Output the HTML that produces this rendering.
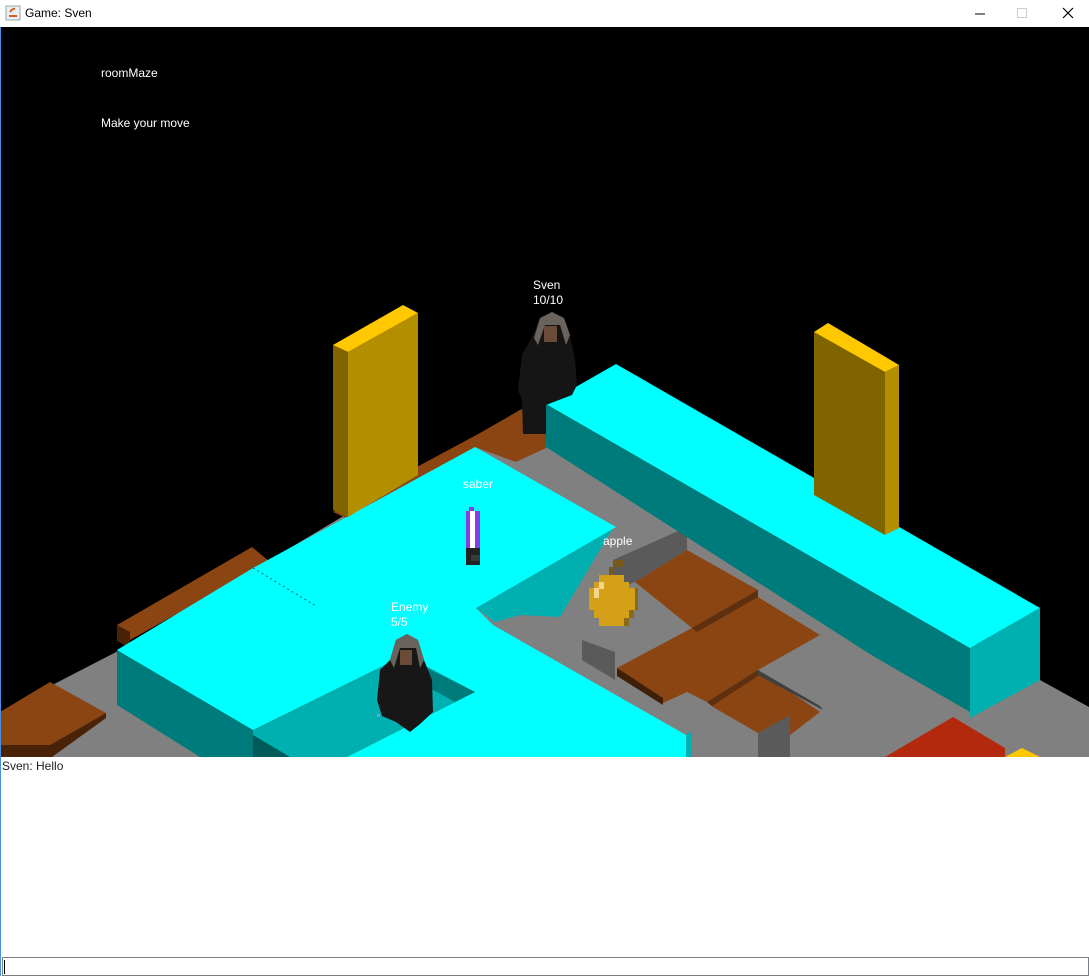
<!DOCTYPE html>
<html><head><meta charset="utf-8"><style>
html,body{margin:0;padding:0;width:1089px;height:976px;overflow:hidden;background:#fff;font-family:"Liberation Sans",sans-serif;}
.t{position:absolute;color:#fff;font-size:12px;line-height:14px;white-space:nowrap;}
</style></head><body>
<svg width="1089" height="976" style="position:absolute;left:0;top:0" xmlns="http://www.w3.org/2000/svg">
<defs><clipPath id="c"><rect x="1" y="27" width="1088" height="730"/></clipPath></defs>
<rect x="0" y="0" width="1089" height="27" fill="#fff"/>
<rect x="0" y="27" width="1" height="949" fill="#4a90e2"/>
<g clip-path="url(#c)">
<rect x="0" y="27" width="1089" height="730" fill="#000"/>
<!-- floor base -->
<polygon points="0,712 120,650 520,410 546,404 1040,680 1089,707 1089,760 0,760" fill="#808080"/>
<!-- brown tiles -->
<polygon points="0,712 50,682 106,713 50,745 0,745" fill="#8b4513"/>
<polygon points="0,745 50,745 106,713 106,718 52,757 0,757" fill="#4a2208"/>
<polygon points="117,625 252,547 270,562 130,640" fill="#8b4513"/>
<polygon points="117,625 130,632 130,648 117,641" fill="#4a2208"/>
<polygon points="333,512 480,433 520,410 546,405 546,448 516,462 475,447 350,520" fill="#8b4513"/>
<!-- gray box near apple -->
<polygon points="613,560 687,527 687,550 635,582 613,590" fill="#5a5a5a"/>
<polygon points="582,640 615,652 615,680 582,660" fill="#5a5a5a"/>
<!-- middle brown -->
<polygon points="635,582 687,550 758,590 758,597 820,635 758,670 820,712 790,735 757,745 707,702 687,692 663,703 617,668 692,628" fill="#8b4513"/>
<polygon points="692,628 758,590 758,597 697,632" fill="#5e3010"/>
<polygon points="617,668 663,698 663,705 617,676" fill="#3f1f08"/>
<polygon points="707,702 758,670 758,676 712,706" fill="#5e3010"/>
<polygon points="758,670 820,706 823,710 758,675" fill="#404040"/>
<!-- gray raised block bottom middle -->
<polygon points="687,692 758,733 758,757 686,757" fill="#808080"/>
<polygon points="758,733 790,715 790,757 758,757" fill="#5a5a5a"/>
<polygon points="885,757 953,717 1005,748 1005,757" fill="#b3290e"/>
<polygon points="1005,757 1022,748 1040,757" fill="#ffc800"/>
<!-- right wall block -->
<polygon points="546,404 970,648 970,718 546,447" fill="#007b7b"/>
<polygon points="828,630 970,712 970,718 760,672" fill="#808080"/>
<polygon points="970,648 1040,608 1040,680 970,718" fill="#00b0b0"/>
<polygon points="616,364 1040,608 970,648 546,404" fill="#00ffff"/>
<!-- left L block -->
<polygon points="117,650 253,728 253,757 200,757 117,705" fill="#007b7b"/>
<polygon points="476,608 613,528 560,617 520,615 495,622" fill="#00b0b0"/>
<polygon points="117,650 253,568 475,447 616,527 476,608 493,625 686,735 686,757 347,757 475,692 405,655 253,730" fill="#00ffff"/>
<polygon points="253,730 405,655 475,692 347,757 253,757" fill="#00b0b0"/>
<polygon points="415,662 475,692 455,702 415,680" fill="#007b7b"/>
<polygon points="253,735 290,757 253,757" fill="#005a5a"/>
<polygon points="686,735 692,731 692,757 686,757" fill="#00b0b0"/>
<line x1="253" y1="568" x2="316" y2="606" stroke="#0a6a6a" stroke-width="1" stroke-dasharray="2,3"/>
<!-- left pillar -->
<polygon points="333,345 348,352 348,517 333,510" fill="#7f6400"/>
<polygon points="348,352 418,313 418,475 348,517" fill="#b38f00"/>
<polygon points="333,345 403,305 418,313 348,352" fill="#ffc800"/>
<!-- right pillar -->
<polygon points="814,332 885,372 885,535 814,495" fill="#7f6400"/>
<polygon points="885,372 899,365 899,528 885,535" fill="#b38f00"/>
<polygon points="814,332 828,323 899,365 885,372" fill="#ffc800"/>
<!-- Sven figure -->
<g>
<path d="M533,335 L540,318 L552,312 L564,318 L570,335 L575,360 L577,385 L572,395 L546,405 L546,434 L523,434 L522,400 L518,390 L522,355 Z" fill="#151515"/>
<path d="M540,318 L552,312 L564,318 L570,335 L566,345 L560,325 L545,325 L538,345 L534,338 Z" fill="#6a625c"/>
<rect x="544" y="326" width="13" height="16" fill="#6b4a38"/>
</g>
<!-- Enemy figure -->
<g>
<path d="M390,660 L396,640 L407,634 L418,640 L424,660 L432,680 L433,712 L420,724 L410,732 L396,722 L382,716 L377,700 L380,670 Z" fill="#171717"/>
<path d="M396,640 L407,634 L418,640 L424,660 L420,668 L416,648 L400,648 L394,668 L390,660 Z" fill="#6a625c"/>
<rect x="400" y="650" width="12" height="15" fill="#6b4a38"/>
<rect x="377" y="714" width="3" height="3" fill="#6aa0e0"/>
</g>
<!-- saber -->
<rect x="466" y="511" width="14" height="37" fill="#8a3be2"/>
<rect x="470" y="511" width="5" height="37" fill="#fff"/>
<rect x="469" y="507" width="5" height="4" fill="#8a3be2"/>
<rect x="466" y="548" width="14" height="17" fill="#222"/>
<rect x="471" y="555" width="9" height="6" fill="#3a3a3a"/>
<!-- apple -->
<rect x="614" y="560" width="10" height="7" fill="#7a5a1a"/>
<rect x="609" y="567" width="5" height="8" fill="#7a5a1a"/>
<path d="M599,575 L624,575 L624,582 L629,582 L629,588 L635,588 L635,610 L629,610 L629,618 L624,618 L624,626 L599,626 L599,618 L594,618 L594,610 L589,610 L589,588 L594,588 L594,582 L599,582 Z" fill="#d4a017"/>
<rect x="594" y="588" width="5" height="10" fill="#f5d58a"/>
<rect x="599" y="582" width="5" height="7" fill="#f5d58a"/>
<rect x="629" y="582" width="0" height="0"/>
<rect x="629" y="610" width="5" height="8" fill="#8a6a1a"/>
<rect x="624" y="618" width="5" height="8" fill="#8a6a1a"/>
<rect x="635" y="588" width="3" height="22" fill="#8a6a1a"/>
</g>
<!-- title bar -->
<rect x="6" y="6" width="14" height="14" fill="#e8eef6" stroke="#9aa" stroke-width="1"/>
<path d="M9,16 h8 M10,12 q3,-4 5,-3" stroke="#d06020" stroke-width="2" fill="none"/>
<line x1="975" y1="14" x2="985" y2="14" stroke="#000" stroke-width="1"/>
<rect x="1017.5" y="8.5" width="9" height="9" fill="none" stroke="#ccc"/>
<path d="M1063,8 L1073,18 M1073,8 L1063,18" stroke="#000" stroke-width="1.2"/>
<!-- chat input -->
<rect x="2.5" y="957.5" width="1086" height="18" fill="#fff" stroke="#7a8088"/>
<line x1="4.5" y1="960" x2="4.5" y2="974" stroke="#000"/>
</svg>
<div class="t" style="left:25px;top:6px;color:#000;font-size:12px;">Game: Sven</div>
<div class="t" style="left:101px;top:66px;">roomMaze</div>
<div class="t" style="left:101px;top:116px;">Make your move</div>
<div class="t" style="left:533px;top:278px;">Sven</div>
<div class="t" style="left:533px;top:293px;">10/10</div>
<div class="t" style="left:463px;top:477px;">saber</div>
<div class="t" style="left:603px;top:534px;">apple</div>
<div class="t" style="left:391px;top:600px;">Enemy</div>
<div class="t" style="left:391px;top:615px;">5/5</div>
<div class="t" style="left:2px;top:759px;color:#222;">Sven: Hello</div>
</body></html>
